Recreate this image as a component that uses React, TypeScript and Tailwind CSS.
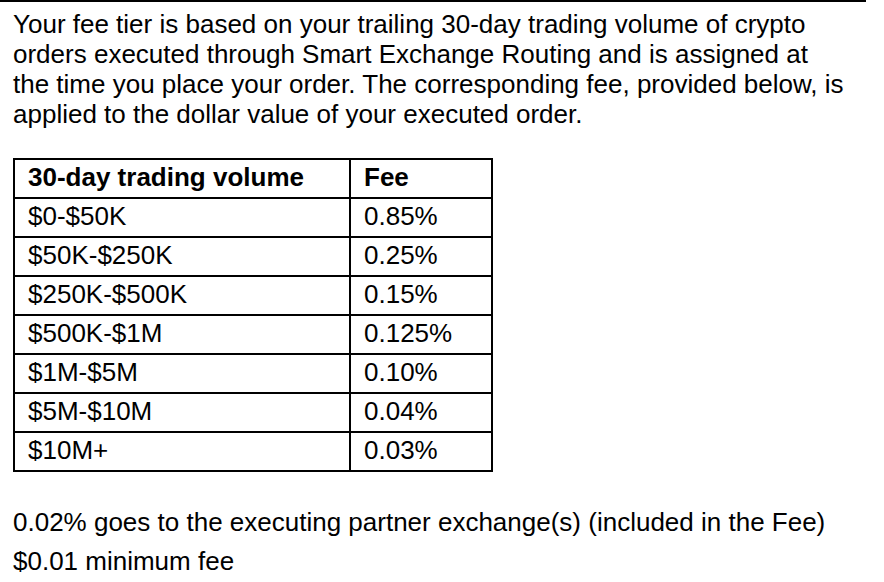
const tiers = [
  { volume: '$0-$50K', fee: '0.85%' },
  { volume: '$50K-$250K', fee: '0.25%' },
  { volume: '$250K-$500K', fee: '0.15%' },
  { volume: '$500K-$1M', fee: '0.125%' },
  { volume: '$1M-$5M', fee: '0.10%' },
  { volume: '$5M-$10M', fee: '0.04%' },
  { volume: '$10M+', fee: '0.03%' },
];

export default function App() {
  return (
    <div className="w-[884px] h-[582px] bg-white text-black overflow-hidden font-['Liberation_Sans',Arial,sans-serif]">
      <div className="w-[866px] border-t-2 border-black" />
      <div className="px-[13px]">
        <p className="mt-[7px] text-[26px] leading-[30px] whitespace-nowrap">
          Your fee tier is based on your trailing 30-day trading volume of crypto
          <br />
          orders executed through Smart Exchange Routing and is assigned at
          <br />
          the time you place your order. The corresponding fee, provided below, is
          <br />
          applied to the dollar value of your executed order.
        </p>

        {/* fee table */}
        <div className="mt-[29px] w-[480px] border-2 border-black text-[26px]">
          <div className="flex h-[39px] border-b-2 border-black font-bold">
            <div className="w-[336px] flex items-end pl-[13px] border-r-2 border-black">30-day trading volume</div>
            <div className="flex-1 flex items-end pl-[13px]">Fee</div>
          </div>
          {tiers.map((t, i) => {
            const last = i === tiers.length - 1;
            return (
              <div key={t.volume} className={last ? 'flex h-[37px]' : 'flex h-[39px] border-b-2 border-black'}>
                <div className="w-[336px] flex items-end pl-[13px] border-r-2 border-black">{t.volume}</div>
                <div className="flex-1 flex items-end pl-[13px]">{t.fee}</div>
              </div>
            );
          })}
        </div>

        <div className="mt-[31px] text-[26px] leading-[39px]">
          <p>0.02% goes to the executing partner exchange(s) (included in the Fee)</p>
          <p>$0.01 minimum fee</p>
        </div>
      </div>
    </div>
  );
}
